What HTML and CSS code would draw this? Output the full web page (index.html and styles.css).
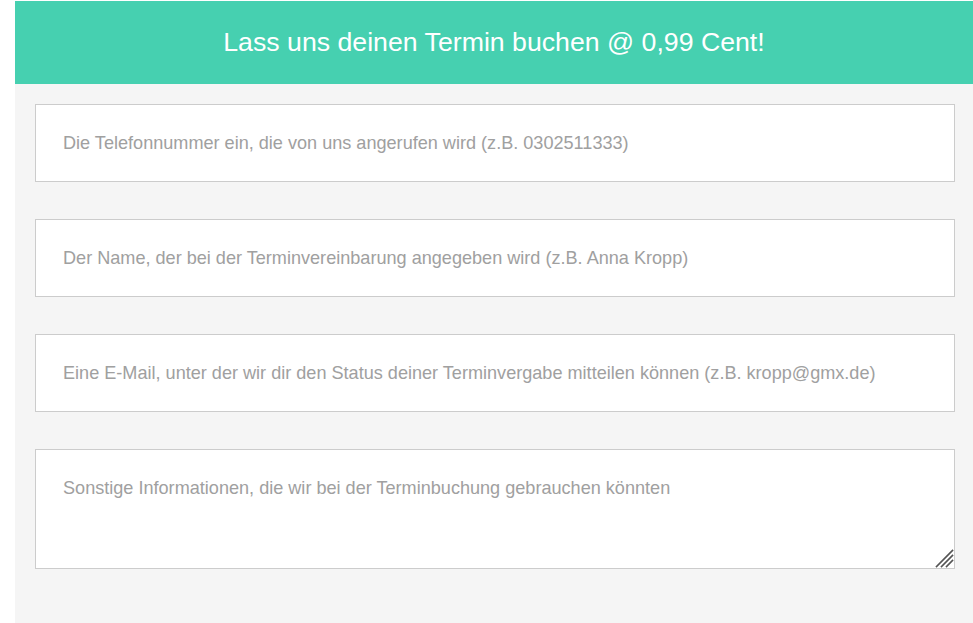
FILE: index.html
```html
<!DOCTYPE html>
<html lang="de">
<head>
<meta charset="utf-8">
<title>Termin buchen</title>
<link rel="stylesheet" href="styles.css">
</head>
<body>
<div class="page">
  <header class="banner">
    <h1 class="banner-title">Lass uns deinen Termin buchen @ 0,99 Cent!</h1>
  </header>
  <form class="form">
    <input class="field" type="text" placeholder="Die Telefonnummer ein, die von uns angerufen wird (z.B. 0302511333)">
    <input class="field" type="text" placeholder="Der Name, der bei der Terminvereinbarung angegeben wird (z.B. Anna Kropp)">
    <input class="field" type="email" placeholder="Eine E-Mail, unter der wir dir den Status deiner Terminvergabe mitteilen können (z.B. kropp@gmx.de)">
    <div class="area-wrap">
      <textarea class="field area" placeholder="Sonstige Informationen, die wir bei der Terminbuchung gebrauchen könnten"></textarea>
      <svg class="grip" width="19" height="19" viewBox="0 0 19 19" aria-hidden="true">
        <g stroke="#555555" stroke-width="1.6" stroke-linecap="square">
          <line x1="1.5" y1="17.5" x2="17.5" y2="1.5"/>
          <line x1="6.5" y1="17.5" x2="17.5" y2="6.5"/>
          <line x1="11.5" y1="17.5" x2="17.5" y2="11.5"/>
        </g>
      </svg>
    </div>
  </form>
</div>
</body>
</html>
```
FILE: styles.css
```css
html, body {
  margin: 0;
  padding: 0;
  background: #ffffff;
  font-family: "Liberation Sans", Arial, sans-serif;
}
.page {
  margin: 1px 0 0 15px;
  min-height: 622px;
  background: #f5f5f5;
  display: flex;
  flex-direction: column;
}
.banner {
  height: 83px;
  background: #46d0b0;
  display: flex;
  align-items: center;
  justify-content: center;
}
.banner-title {
  margin: 0;
  color: #ffffff;
  font-weight: normal;
  font-size: 26.7px;
}
.form {
  display: flex;
  flex-direction: column;
  gap: 37px;
  padding: 20px 18px 40px 20px;
}
.field {
  box-sizing: border-box;
  height: 78px;
  width: 100%;
  margin: 0;
  border: 1px solid #cccccc;
  background: #ffffff;
  padding: 0 27px;
  font-family: "Liberation Sans", Arial, sans-serif;
  font-size: 18.1px;
  color: #555;
  outline: none;
}
.field::placeholder {
  color: #a0a0a0;
  opacity: 1;
}
.area-wrap {
  position: relative;
  display: flex;
}
.area {
  display: block;
  height: 120px;
  padding: 27px 27px;
  resize: none;
  line-height: 22px;
}
.grip {
  position: absolute;
  right: 1px;
  bottom: 1px;
}
```
